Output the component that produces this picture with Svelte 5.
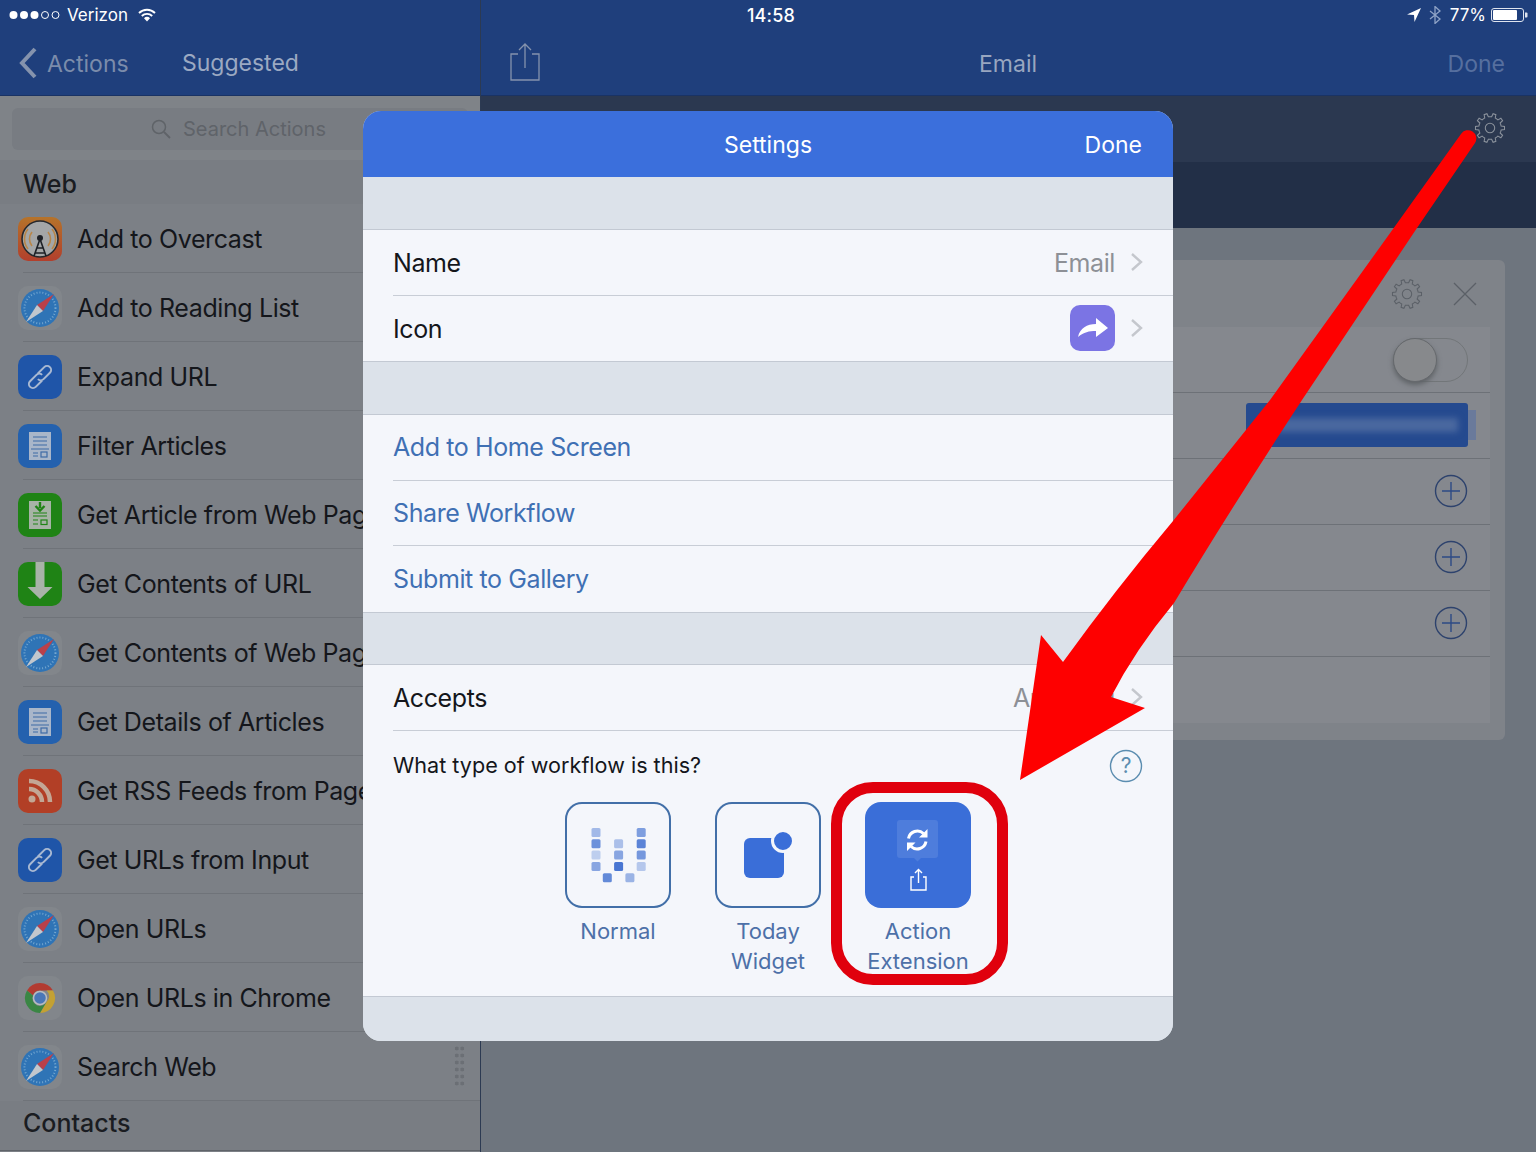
<script>
  const actions = [
    { name: 'Add to Overcast', icon: 'overcast' },
    { name: 'Add to Reading List', icon: 'safari' },
    { name: 'Expand URL', icon: 'link' },
    { name: 'Filter Articles', icon: 'doc' },
    { name: 'Get Article from Web Page', icon: 'greendoc' },
    { name: 'Get Contents of URL', icon: 'download' },
    { name: 'Get Contents of Web Page', icon: 'safari' },
    { name: 'Get Details of Articles', icon: 'doc' },
    { name: 'Get RSS Feeds from Page', icon: 'rss' },
    { name: 'Get URLs from Input', icon: 'link' },
    { name: 'Open URLs', icon: 'safari' },
    { name: 'Open URLs in Chrome', icon: 'chrome' },
    { name: 'Search Web', icon: 'safari' }
  ];

  const bars = [
    [0, 0, 0.45], [0, 1, 0.75], [0, 2, 0.3], [0, 3, 0.6],
    [1, 4, 0.8],
    [2, 1, 0.4], [2, 2, 0.6], [2, 3, 0.95],
    [3, 4, 0.5],
    [4, 0, 0.65], [4, 1, 0.85], [4, 2, 0.7], [4, 3, 0.35]
  ];

  // outline of a cog with rounded-ish teeth
  function gear(c, outer, inner, teeth) {
    let d = '';
    const step = (Math.PI * 2) / teeth;
    for (let i = 0; i < teeth; i++) {
      const a = i * step;
      const pts = [
        [inner, a - step * 0.5],
        [inner, a - step * 0.27],
        [outer, a - step * 0.16],
        [outer, a + step * 0.16],
        [inner, a + step * 0.27]
      ];
      for (const [r, t] of pts) {
        const x = (c + r * Math.cos(t)).toFixed(2);
        const y = (c + r * Math.sin(t)).toFixed(2);
        d += (d ? 'L' : 'M') + x + ' ' + y;
      }
    }
    return d + 'Z';
  }

  const gearPath = gear(17, 15.5, 12, 10);
</script>

{#snippet docLines(y)}
  <rect x="11" y={y} width="22" height="28" fill="#a9b6c9" />
  <path d="M15 {y + 5}h14M15 {y + 9}h14M15 {y + 13}h14M13 {y + 17}h18M15 {y + 21}h5M15 {y + 24}h5" stroke="#3e6aa6" stroke-width="1.2" fill="none" />
  <rect x="23" y={y + 20} width="6" height="5" fill="none" stroke="#3e6aa6" stroke-width="1.2" />
{/snippet}

{#snippet actionIcon(kind)}
  <svg class="action-icon" viewBox="0 0 44 44" aria-hidden="true">
    {#if kind === 'overcast'}
      <defs>
        <linearGradient id="oc" x1="0" y1="0" x2="0" y2="1">
          <stop offset="0" stop-color="#b5732a" />
          <stop offset="1" stop-color="#b23f2c" />
        </linearGradient>
      </defs>
      <rect width="44" height="44" rx="10" fill="url(#oc)" />
      <circle cx="22" cy="22" r="18" fill="#a4a6a7" stroke="#26282c" stroke-width="1.6" />
      <path d="M14 15a11 11 0 0 0 0 14M30 15a11 11 0 0 1 0 14M10 12a16 16 0 0 0 0 20M34 12a16 16 0 0 1 0 20" fill="none" stroke="#b98648" stroke-width="1.6" />
      <circle cx="22" cy="21" r="3" fill="#1d2026" />
      <path d="M22 22l-6 17M22 22l6 17M18.5 31h7M17 36h10" fill="none" stroke="#1d2026" stroke-width="1.6" />
    {:else if kind === 'safari'}
      <rect width="44" height="44" rx="10" fill="#82868b" />
      <circle cx="22" cy="22" r="19" fill="#2f74b6" />
      <circle cx="22" cy="22" r="15.5" fill="none" stroke="#74a6cf" stroke-width="2" stroke-dasharray="1 2" />
      <path d="M36 8L19 19l6 6z" fill="#b9404a" />
      <path d="M8 36l17-11-6-6z" fill="#c2c7cd" />
    {:else if kind === 'link'}
      <rect width="44" height="44" rx="10" fill="#1f55a8" />
      <g fill="none" stroke="#a9b9d2" stroke-width="2" transform="rotate(-45 22 22)">
        <path d="M21 26H12a4 4 0 0 1 0-8h9a4 4 0 0 1 4 4" />
        <path d="M23 18h9a4 4 0 0 1 0 8h-9a4 4 0 0 1-4-4" />
      </g>
    {:else if kind === 'doc'}
      <rect width="44" height="44" rx="10" fill="#2461ae" />
      {@render docLines(8)}
    {:else if kind === 'greendoc'}
      <rect width="44" height="44" rx="10" fill="#1f8315" />
      <rect x="11" y="8" width="22" height="28" fill="#a7b3a6" />
      <path d="M22 9v6M17.5 13l4.500 4.500 4.500-4.500" fill="none" stroke="#1f8315" stroke-width="2.400" />
      <path d="M15 20h14M15 23h14M15 27h5M15 31h5" stroke="#1f8315" stroke-width="1.200" />
      <rect x="23" y="27" width="6" height="4.500" fill="none" stroke="#1f8315" stroke-width="1.200" />
    {:else if kind === 'download'}
      <rect width="44" height="44" rx="10" fill="#1f8315" />
      <path d="M17.500 0h9v25h8L22 37 9.500 25h8z" fill="#a9b3a8" />
    {:else if kind === 'rss'}
      <rect width="44" height="44" rx="10" fill="#b23f26" />
      <circle cx="14" cy="30" r="3.500" fill="#c3a795" />
      <path d="M11 20a13 13 0 0 1 13 13M11 12a21 21 0 0 1 21 21" fill="none" stroke="#c3a795" stroke-width="4.500" />
    {:else}
      <rect width="44" height="44" rx="10" fill="#82868b" />
      <path d="M22 7a15 15 0 0 1 13 7.500H22a7.500 7.500 0 0 0-7 5L9 14.500A15 15 0 0 1 22 7z" fill="#b23b31" />
      <path d="M35 14.500A15 15 0 0 1 22 37l6.500-11a7.500 7.500 0 0 0 0-11.500z" fill="#c3a133" />
      <path d="M9 14.500A15 15 0 0 0 22 37l6.500-11a7.500 7.500 0 0 1-13.500-6.500z" fill="#3a8644" />
      <circle cx="22" cy="22" r="6.500" fill="#4a77b8" stroke="#b9bcc0" stroke-width="1.500" />
    {/if}
  </svg>
{/snippet}

{#snippet chevron()}
  <svg class="chevron" viewBox="0 0 13 20" aria-hidden="true">
    <path d="M2 2l9 8-9 8" fill="none" stroke="#c4c7cd" stroke-width="2.400" />
  </svg>
{/snippet}

{#snippet plus()}
  <svg class="plus" viewBox="0 0 34 34" aria-hidden="true">
    <circle cx="17" cy="17" r="15.500" fill="none" stroke="#2d426d" stroke-width="1.400" />
    <path d="M17 8v18M8 17h18" stroke="#2d4a85" stroke-width="1.400" />
  </svg>
{/snippet}

<div class="ipad">
  <div class="status">
    <div class="status-left">
      <svg class="signal" viewBox="0 0 52 12" aria-hidden="true">
        <circle cx="4.500" cy="6" r="4" fill="#fff" />
        <circle cx="15" cy="6" r="4" fill="#fff" />
        <circle cx="25.500" cy="6" r="4" fill="#fff" />
        <circle cx="36" cy="6" r="3.500" fill="none" stroke="#fff" />
        <circle cx="46.500" cy="6" r="3.500" fill="none" stroke="#fff" />
      </svg>
      <span>Verizon</span>
      <svg class="wifi" viewBox="0 0 18 14" aria-hidden="true">
        <path d="M1 5a11.500 11.500 0 0 1 16 0M3.800 8a7.500 7.500 0 0 1 10.400 0" fill="none" stroke="#fff" stroke-width="1.900" />
        <path d="M6 10.200a4 4 0 0 1 6 0L9 13.500z" fill="#fff" />
      </svg>
    </div>
    <span class="time">14:58</span>
    <div class="status-right">
      <svg class="locate" viewBox="0 0 14 14" aria-hidden="true"><path d="M14 0L0 6.500l7 .5.500 7z" fill="#fff" /></svg>
      <svg class="bt" viewBox="0 0 12 18" aria-hidden="true"><path d="M1 5l10 8-5 4.500V.500L11 5 1 13" fill="none" stroke="#8fa3c6" stroke-width="1.300" /></svg>
      <span>77%</span>
      <svg class="battery" viewBox="0 0 37 14" aria-hidden="true">
        <rect x=".5" y=".5" width="32" height="13" rx="2.500" fill="none" stroke="#dfe4ee" />
        <rect x="2" y="2" width="24" height="10" rx="1" fill="#fff" />
        <path d="M34 4.500h1.500a1 1 0 0 1 1 1v3a1 1 0 0 1-1 1H34z" fill="#dfe4ee" />
      </svg>
    </div>
  </div>

  <aside class="left">
    <header class="nav left-nav">
      <svg class="back" viewBox="0 0 20 32" aria-hidden="true">
        <path d="M17 2L4 16l13 14" fill="none" stroke="#8593ad" stroke-width="4" />
      </svg>
      <span class="nav-back">Actions</span>
      <span class="nav-title">Suggested</span>
    </header>
    <div class="search-wrap">
      <div class="search">
        <svg class="search-icon" viewBox="0 0 20 20" aria-hidden="true">
          <circle cx="8" cy="8" r="6.500" fill="none" stroke="#5f6368" stroke-width="1.500" />
          <path d="M13 13l6 6" stroke="#5f6368" stroke-width="1.800" />
        </svg>
        <span>Search Actions</span>
      </div>
    </div>
    <h2 class="group">Web</h2>
    <ul class="list">
      {#each actions as action}
        <li>
          {@render actionIcon(action.icon)}
          <span class="row-name">{action.name}</span>
        </li>
      {/each}
    </ul>
    <h2 class="group contacts">Contacts</h2>
    <div class="handle"></div>
  </aside>

  <main class="right">
    <header class="nav right-nav">
      <svg class="share" viewBox="0 0 30 38" aria-hidden="true">
        <path d="M8 11H1v26h28V11h-7M15 25V1M9 7l6-6 6 6" fill="none" stroke="#8593ad" stroke-width="1.300" />
      </svg>
      <span class="right-title">Email</span>
      <span class="right-done">Done</span>
    </header>
    <div class="toolbar">
      <svg class="gear top-gear" viewBox="0 0 34 34" aria-hidden="true">
        <path d={gearPath} fill="none" stroke="#8b929c" stroke-width="1.100" />
        <circle cx="17" cy="17" r="5" fill="none" stroke="#8b929c" stroke-width="1.100" />
      </svg>
    </div>
    <div class="subbar"></div>
    <div class="canvas">
      <section class="card">
        <div class="card-head">
          <svg class="gear" viewBox="0 0 34 34" aria-hidden="true">
            <path d={gearPath} fill="none" stroke="#5b6067" stroke-width="1.100" />
            <circle cx="17" cy="17" r="5" fill="none" stroke="#5b6067" stroke-width="1.100" />
          </svg>
          <svg class="close" viewBox="0 0 24 24" aria-hidden="true">
            <path d="M1 1l22 22M23 1L1 23" stroke="#5b6067" stroke-width="1.300" />
          </svg>
        </div>
        <div class="card-body">
          <div class="card-row"><div class="toggle"><div class="knob"></div></div></div>
          <div class="card-row">
            <div class="field"><div class="field-blur"></div></div>
            <div class="field-tail"></div>
          </div>
          <div class="card-row">{@render plus()}</div>
          <div class="card-row">{@render plus()}</div>
          <div class="card-row">{@render plus()}</div>
          <div class="card-row last"></div>
        </div>
      </section>
    </div>
  </main>

  <div class="modal">
    <header class="modal-head">
      <span>Settings</span>
      <span class="modal-done">Done</span>
    </header>
    <div class="gap first"></div>
    <div class="group-rows">
      <div class="m-row"><span class="m-inner"><span>Name</span><span class="m-value">Email</span>{@render chevron()}</span></div>
      <div class="m-row"><span class="m-inner last-inner"><span>Icon</span>
        <svg class="wf-icon" viewBox="0 0 45 46" aria-hidden="true">
          <rect width="45" height="46" rx="10" fill="#7b74e4" />
          <path d="M8 32c2-9 9-13 18-13v-6l12 10-12 9v-6c-7 0-12 1-18 6z" fill="#fff" />
        </svg>
        {@render chevron()}</span></div>
    </div>
    <div class="gap wide"></div>
    <div class="group-rows">
      <div class="m-row"><span class="m-inner link">Add to Home Screen</span></div>
      <div class="m-row"><span class="m-inner link">Share Workflow</span></div>
      <div class="m-row"><span class="m-inner link last-inner">Submit to Gallery</span></div>
    </div>
    <div class="gap"></div>
    <div class="group-rows">
      <div class="m-row"><span class="m-inner"><span>Accepts</span><span class="m-value">Anything</span>{@render chevron()}</span></div>
      <div class="type-block">
        <div class="type-question">
          <span>What type of workflow is this?</span>
          <svg class="help" viewBox="0 0 34 34" aria-hidden="true">
            <circle cx="17" cy="17" r="15.500" fill="none" stroke="#5b8db0" stroke-width="1.400" />
            <text x="17" y="24" text-anchor="middle" class="help-mark">?</text>
          </svg>
        </div>
        <div class="types">
          <div class="type">
            <svg class="tile" viewBox="0 0 106 106" aria-hidden="true">
              <rect x="1" y="1" width="104" height="104" rx="16" fill="none" stroke="#426fa8" stroke-width="2" />
              {#each bars as [col, row, alpha]}
                <rect x={26.500 + col * 11.300} y={26 + row * 11.300} width="9" height="9" rx="1.500" fill="#3f6fd0" opacity={alpha} />
              {/each}
            </svg>
            <span>Normal</span>
          </div>
          <div class="type">
            <svg class="tile" viewBox="0 0 106 106" aria-hidden="true">
              <rect x="1" y="1" width="104" height="104" rx="16" fill="none" stroke="#426fa8" stroke-width="2" />
              <rect x="29" y="36" width="40" height="40" rx="6" fill="#3a6ed8" />
              <circle cx="68" cy="39" r="10.500" fill="#3a6ed8" stroke="#f4f6fb" stroke-width="3" />
            </svg>
            <span>Today<br />Widget</span>
          </div>
          <div class="type">
            <svg class="tile" viewBox="0 0 106 106" aria-hidden="true">
              <rect width="106" height="106" rx="16" fill="#3a6ed8" />
              <path d="M35 18h35a3 3 0 0 1 3 3v32a3 3 0 0 1-3 3H56l-3.500 3.500L49 56H35a3 3 0 0 1-3-3V21a3 3 0 0 1 3-3z" fill="#4e7ddc" />
              <path d="M43.500 36.500A9 9 0 0 1 58.500 31.500M61 39.500A9 9 0 0 1 46 44.500" fill="none" stroke="#fff" stroke-width="3" />
              <path d="M62.500 27v8.500h-8.500zM42 49v-8.500h8.500z" fill="#fff" />
              <path d="M49 75h-3v13h15V75h-3M53.500 81V68M50 71l3.500-3.500 3.500 3.500" fill="none" stroke="#fff" stroke-width="1.400" />
            </svg>
            <span>Action<br />Extension</span>
          </div>
        </div>
      </div>
    </div>
    <div class="gap tail"></div>
  </div>

  <div class="selected"></div>

  <svg class="arrow" viewBox="0 0 1536 1152" aria-hidden="true">
    <path d="M1461 134L1393 229L1270 400L1173 521Q1115 590 1063 662L1041 635L1020 780L1145 708L1111 697Q1135 650 1174 603Q1230 510 1302 400L1417 228L1475 143A8 8 0 0 0 1461 134Z" fill="#fe0000" />
  </svg>
</div>

<style>
  :global(body) {
    margin: 0;
  }

  .ipad {
    position: relative;
    display: flex;
    width: 1536px;
    height: 1152px;
    overflow: hidden;
    font-family: Inter, "Noto Sans", sans-serif;
    color: #14161b;
  }

  .status {
    position: absolute;
    top: 0;
    left: 0;
    right: 0;
    height: 30px;
    padding: 0 8px 0 9px;
    display: grid;
    grid-template-columns: 1fr auto 1fr;
    align-items: center;
    color: #fff;
    font-size: 17px;
    z-index: 2;
  }

  .status-left {
    display: flex;
    align-items: center;
    gap: 6px;
  }

  .status-right {
    display: flex;
    align-items: center;
    justify-content: flex-end;
    gap: 5px;
  }

  .time {
    font-weight: 500;
    font-size: 18px;
    margin-left: 5px;
    letter-spacing: 0.2px;
  }

  .signal {
    width: 52px;
    height: 12px;
  }

  .wifi {
    width: 18px;
    height: 14px;
    margin-left: 4px;
  }

  .locate {
    width: 14px;
    height: 14px;
    margin-right: 3px;
  }

  .bt {
    width: 12px;
    height: 18px;
    margin-right: 4px;
  }

  .battery {
    width: 37px;
    height: 14px;
  }

  .nav {
    height: 96px;
    box-sizing: border-box;
    padding-top: 32px;
    background: #1f3f7c;
    border-bottom: 1px solid #1a3364;
    display: flex;
    align-items: center;
    font-size: 23px;
    flex-shrink: 0;
  }

  .left {
    width: 480px;
    height: 1152px;
    flex-shrink: 0;
    position: relative;
    background: #7c8086;
    border-right: 1px solid #2c3a52;
    box-sizing: content-box;
    display: flex;
    flex-direction: column;
  }

  .left-nav {
    padding-left: 18px;
  }

  .back {
    width: 20px;
    height: 32px;
    margin-right: 9px;
    margin-top: -1px;
  }

  .nav-back {
    color: #7b8cab;
    width: 135px;
  }

  .nav-title {
    color: #9ba9c2;
    margin-top: -2px;
  }

  .search-wrap {
    height: 64px;
    box-sizing: border-box;
    padding: 12px 12px 10px;
    background: #7f8388;
    flex-shrink: 0;
  }

  .search {
    height: 100%;
    background: #787c82;
    border-radius: 6px;
    display: flex;
    align-items: center;
    gap: 12px;
    padding-left: 139px;
    color: #5f6369;
    font-size: 20px;
  }

  .search-icon {
    width: 20px;
    height: 20px;
  }

  .group {
    margin: 0;
    height: 44px;
    flex-shrink: 0;
    box-sizing: border-box;
    padding: 5px 0 0 23px;
    font-size: 25px;
    font-weight: 500;
    line-height: 38px;
    color: #1a1c21;
    background: #797d83;
  }

  .group.contacts {
    height: 50px;
    padding-top: 3px;
    border-bottom: 1px solid #5f6369;
  }

  .list {
    list-style: none;
    margin: 0;
    padding: 0;
    background: #7c8086;
  }

  .list li {
    height: 69px;
    display: flex;
    align-items: center;
    gap: 15px;
    padding-left: 18px;
    position: relative;
    font-size: 25px;
    letter-spacing: -0.4px;
    white-space: nowrap;
    box-sizing: border-box;
  }

  .list li::after {
    content: "";
    position: absolute;
    left: 23px;
    right: 0;
    bottom: 0;
    height: 1px;
    background: #6f7379;
  }

  .action-icon {
    width: 44px;
    height: 44px;
    flex-shrink: 0;
  }

  .handle {
    position: absolute;
    left: 454px;
    top: 1045px;
    width: 11px;
    height: 43px;
    background-image: radial-gradient(circle, #6b6f75 1.800px, transparent 2.200px);
    background-size: 5.500px 7px;
  }

  .right {
    flex: 1;
    display: flex;
    flex-direction: column;
    background: #6e757e;
    min-width: 0;
  }

  .right-nav {
    position: relative;
    padding: 32px 31px 0 29px;
    justify-content: space-between;
  }

  .share {
    width: 30px;
    height: 38px;
    margin-top: -4px;
  }

  .right-title {
    color: #98a6c0;
    position: absolute;
    left: 498px;
    top: 49px;
    line-height: 30px;
  }

  .right-done {
    color: #566f9f;
  }

  .toolbar {
    height: 66px;
    background: #2b3850;
    display: flex;
    justify-content: flex-end;
    padding: 16px 30px 0 0;
    box-sizing: border-box;
    flex-shrink: 0;
  }

  .gear {
    width: 32px;
    height: 32px;
  }

  .subbar {
    height: 66px;
    background: #222f47;
    flex-shrink: 0;
  }

  .canvas {
    flex: 1;
    padding: 32px 31px 0 0;
  }

  .card {
    margin-left: 200px;
    height: 480px;
    background: #7f8389;
    border-radius: 6px;
    padding: 0 15px 17px 0;
    box-sizing: border-box;
    display: flex;
    flex-direction: column;
  }

  .card-head {
    height: 67px;
    flex-shrink: 0;
    display: flex;
    justify-content: flex-end;
    align-items: center;
    gap: 30px;
    padding-right: 13px;
  }

  .close {
    width: 24px;
    height: 24px;
  }

  .card-body {
    flex: 1;
    background: #85888e;
    display: flex;
    flex-direction: column;
  }

  .card-row {
    height: 66px;
    box-sizing: border-box;
    border-bottom: 1px solid #6d7177;
    display: flex;
    align-items: center;
    justify-content: flex-end;
    padding: 0 22px 2px 0;
    position: relative;
  }

  .card-row.last {
    border-bottom: none;
  }

  .toggle {
    width: 75px;
    height: 44px;
    margin-top: 2px;
    box-sizing: border-box;
    border: 1px solid #727679;
    border-radius: 22px;
  }

  .knob {
    width: 44px;
    height: 44px;
    margin: -1px;
    border-radius: 50%;
    background: #87898c;
    border: 1px solid #66696d;
    box-sizing: border-box;
    box-shadow: 0 3px 5px #5f6367;
  }

  .field {
    width: 222px;
    height: 44px;
    background: #254a8f;
    border-radius: 3px;
    display: flex;
    align-items: center;
    padding: 0 10px 0 30px;
    box-sizing: border-box;
  }

  .field-blur {
    flex: 1;
    height: 14px;
    background: #4a689f;
    filter: blur(3px);
  }

  .field-tail {
    position: absolute;
    right: 14px;
    top: 17px;
    width: 8px;
    height: 30px;
    background: #6a7a9b;
  }

  .plus {
    width: 34px;
    height: 34px;
  }

  .modal {
    position: absolute;
    left: 363px;
    top: 111px;
    width: 810px;
    height: 930px;
    border-radius: 18px;
    overflow: hidden;
    background: #dce2ea;
    display: flex;
    flex-direction: column;
    z-index: 3;
  }

  .modal-head {
    height: 66px;
    box-sizing: border-box;
    padding-top: 2px;
    flex-shrink: 0;
    background: #3b6fdc;
    color: #fff;
    font-size: 23px;
    display: flex;
    align-items: center;
    justify-content: center;
    position: relative;
  }

  .modal-done {
    position: absolute;
    right: 31px;
  }

  .gap {
    height: 53px;
    flex-shrink: 0;
    background: #dce2ea;
  }

  .gap.wide {
    height: 54px;
  }

  .gap.tail {
    flex: 1;
  }

  .group-rows {
    background: #f4f6fb;
    border-top: 1px solid #c3c9d3;
    border-bottom: 1px solid #c3c9d3;
    margin: -1px 0;
    flex-shrink: 0;
    position: relative;
  }

  .m-row {
    height: 65.6px;
    padding-left: 30px;
    font-size: 25px;
    letter-spacing: -0.4px;
  }

  .m-inner {
    height: 100%;
    display: flex;
    align-items: center;
    box-sizing: border-box;
    padding-right: 30px;
    border-bottom: 1px solid #c8cdd6;
  }

  .last-inner {
    border-bottom: none;
  }

  .m-inner > span {
    margin-top: 2px;
  }

  .m-inner > :first-child {
    margin-right: auto;
  }

  .m-value {
    color: #8d9096;
  }

  .link {
    color: #3f70b4;
  }

  .chevron {
    width: 13px;
    height: 20px;
    margin-left: 15px;
  }

  .wf-icon {
    width: 45px;
    height: 46px;
  }

  .type-block {
    height: 265px;
    box-sizing: border-box;
    padding: 17px 30px 0;
  }

  .type-question {
    display: flex;
    justify-content: space-between;
    align-items: center;
    font-size: 21.6px;
    height: 34px;
    margin-bottom: 20px;
  }

  .help {
    width: 34px;
    height: 34px;
    margin-top: 3px;
  }

  .help-mark {
    font-size: 21px;
    fill: #5b8db0;
    font-family: Inter, sans-serif;
  }

  .types {
    display: flex;
    justify-content: center;
    gap: 44px;
    margin-left: -30px;
    margin-right: -30px;
  }

  .type {
    width: 106px;
    display: flex;
    flex-direction: column;
    align-items: center;
    text-align: center;
    color: #4d70a8;
    font-size: 22px;
    line-height: 30px;
    white-space: nowrap;
  }

  .tile {
    width: 106px;
    height: 106px;
    margin-bottom: 8px;
  }

  .selected {
    position: absolute;
    left: 831px;
    top: 782px;
    width: 177px;
    height: 203px;
    box-sizing: border-box;
    border: 11px solid #e0000d;
    border-radius: 42px;
    z-index: 4;
  }

  .arrow {
    position: absolute;
    inset: 0;
    width: 1536px;
    height: 1152px;
    z-index: 5;
  }
</style>
